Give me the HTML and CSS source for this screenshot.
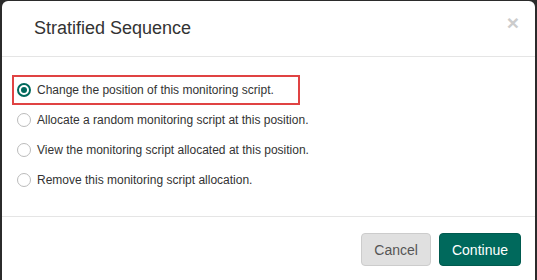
FILE: index.html
```html
<!DOCTYPE html>
<html>
  <head>
    <meta charset="UTF-8">
    <title>Stratified Sequence</title>
    <link rel="stylesheet" href="styles.css">
  </head>
  <body>
    <div class="modal">
      <div class="modal-header">
        <h4>Stratified Sequence</h4>
        <span class="close">&times;</span>
      </div>
      <div class="modal-body">
        <label class="option selected">
          <span class="radio checked"></span>
          Change the position of this monitoring script.
        </label>
        <label class="option">
          <span class="radio"></span>
          Allocate a random monitoring script at this position.
        </label>
        <label class="option">
          <span class="radio"></span>
          View the monitoring script allocated at this position.
        </label>
        <label class="option">
          <span class="radio"></span>
          Remove this monitoring script allocation.
        </label>
      </div>
      <div class="modal-footer">
        <button class="btn btn-cancel">Cancel</button>
        <button class="btn btn-primary">Continue</button>
      </div>
    </div>
  </body>
</html>
```

FILE: styles.css
```css
html,
body {
  margin: 0;
  padding: 0;
  height: 100%;
  overflow: hidden;
  background: #2b2b2b;
  font-family: "Liberation Sans", Arial, sans-serif;
  color: #333;
}

.modal {
  margin: 1px 2px 0 2px;
  height: 279px;
  overflow: hidden;
  background: #fff;
  border-radius: 6px 6px 0 0;
}

.modal-header {
  display: flex;
  align-items: center;
  justify-content: space-between;
  height: 55px;
  padding: 0 16px 0 32px;
  border-bottom: 1px solid #e5e5e5;
}

h4 {
  margin: 0;
  font-size: 18px;
  font-weight: normal;
  color: #333;
}

.close {
  font-size: 21px;
  font-weight: bold;
  color: #ccc;
  margin-top: -12px;
}

.modal-body {
  padding: 18px 10px 21px 10px;
  height: 120px;
  font-size: 12px;
}

.option {
  display: flex;
  align-items: center;
  width: max-content;
  height: 30px;
  padding: 0 24px 0 3px;
  border: 2px solid transparent;
  box-sizing: border-box;
  color: #333;
}

.option.selected {
  border-color: #e04343;
}

.radio {
  width: 12px;
  height: 12px;
  border: 1px solid #bbb;
  border-radius: 50%;
  margin-right: 6px;
  display: flex;
  align-items: center;
  justify-content: center;
}

.radio.checked {
  border: 2px solid #00695c;
  width: 10px;
  height: 10px;
}

.radio.checked::after {
  content: "";
  width: 6px;
  height: 6px;
  border-radius: 50%;
  background: #00695c;
}

.modal-footer {
  display: flex;
  justify-content: flex-end;
  gap: 8px;
  padding: 16px 14px;
  border-top: 1px solid #e5e5e5;
}

.btn {
  font-family: "Liberation Sans", Arial, sans-serif;
  font-size: 14px;
  height: 33px;
  padding: 0 12px;
  border-radius: 4px;
  border: 1px solid transparent;
}

.btn-cancel {
  background: #e0e0e0;
  border-color: #ccc;
  color: #555;
}

.btn-primary {
  background: #00695c;
  border-color: #005a4f;
  color: #fff;
}
```
